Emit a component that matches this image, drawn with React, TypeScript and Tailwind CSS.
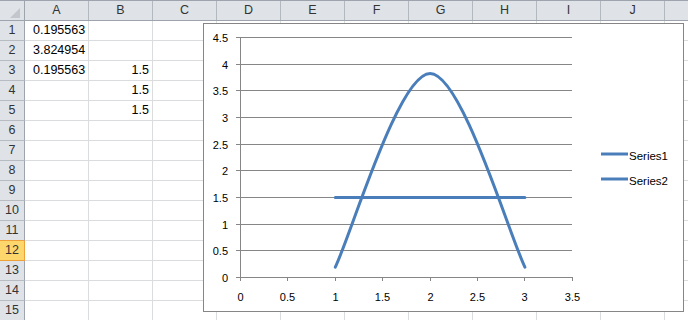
import React from "react";

const cols = ["A", "B", "C", "D", "E", "F", "G", "H", "I", "J"];

// cell contents by row (1-based) -> [A, B]
const data: Record<number, [string, string]> = {
  1: ["0.195563", ""],
  2: ["3.824954", ""],
  3: ["0.195563", "1.5"],
  4: ["", "1.5"],
  5: ["", "1.5"],
};

const px = (v: number) => 240.5 + v * 94.8;
const py = (v: number) => 277.5 - v * 53.333;

function Chart() {
  const yTicks = [0, 0.5, 1, 1.5, 2, 2.5, 3, 3.5, 4, 4.5];
  const xTicks = [0, 0.5, 1, 1.5, 2, 2.5, 3, 3.5];

  // excel style smoothed line through 3 points
  const p0 = [px(1), py(0.195563)];
  const p1 = [px(2), py(3.824954)];
  const p2 = [px(3), py(0.195563)];
  const c1 = [p0[0] + (p1[0] - p0[0]) / 6, p0[1] + (p1[1] - p0[1]) / 6];
  const c2 = [p1[0] - (p2[0] - p0[0]) / 6, p1[1]];
  const c3 = [p1[0] + (p2[0] - p0[0]) / 6, p1[1]];
  const c4 = [p2[0] - (p2[0] - p1[0]) / 6, p2[1] - (p2[1] - p1[1]) / 6];
  const curve = `M${p0[0]} ${p0[1]} C${c1[0]} ${c1[1]} ${c2[0]} ${c2[1]} ${p1[0]} ${p1[1]} C${c3[0]} ${c3[1]} ${c4[0]} ${c4[1]} ${p2[0]} ${p2[1]}`;

  return (
    <div className="absolute left-[203px] top-[23px] w-[481px] h-[289px] border border-[#868686] bg-white">
      <svg width={479} height={287} viewBox="204 24 479 287" className="block">
        {yTicks.map((t) => {
          const y = Math.round(py(t) - 0.5) + 0.5;
          return (
            <g key={t}>
              <line x1={236} x2={572} y1={y} y2={y} stroke="#868686" strokeWidth={1} />
              <text
                x={228}
                y={y + 4}
                textAnchor="end"
                fontSize={11}
                fontFamily="Liberation Sans, Arial, sans-serif"
                fill="#000"
              >
                {t}
              </text>
            </g>
          );
        })}
        <line x1={240.5} x2={240.5} y1={37} y2={281} stroke="#868686" strokeWidth={1} />
        {xTicks.map((t) => {
          const x = Math.round(px(t) - 0.5) + 0.5;
          return (
            <g key={t}>
              <line x1={x} x2={x} y1={277} y2={281} stroke="#868686" strokeWidth={1} />
              <text
                x={x}
                y={300.5}
                textAnchor="middle"
                fontSize={11}
                fontFamily="Liberation Sans, Arial, sans-serif"
                fill="#000"
              >
                {t}
              </text>
            </g>
          );
        })}
        <path d={curve} fill="none" stroke="#4a7ebb" strokeWidth={3} strokeLinecap="round" />
        <line x1={px(1)} x2={px(3)} y1={197.5} y2={197.5} stroke="#4a7ebb" strokeWidth={3} strokeLinecap="round" />

        <line x1={601} x2={628} y1={154} y2={154} stroke="#4a7ebb" strokeWidth={3} />
        <text x={629} y={159.5} fontSize={11.5} fontFamily="Liberation Sans, Arial, sans-serif" fill="#000">
          Series1
        </text>
        <line x1={601} x2={628} y1={179} y2={179} stroke="#4a7ebb" strokeWidth={3} />
        <text x={629} y={184.5} fontSize={11.5} fontFamily="Liberation Sans, Arial, sans-serif" fill="#000">
          Series2
        </text>
      </svg>
    </div>
  );
}

function RowHeader({ n }: { n: number }) {
  if (n === 12) {
    return (
      <div className="w-[25px] shrink-0 flex items-center justify-center bg-[#fdd66c] border-r border-b border-[#eea03a] text-[#333]">
        {n}
      </div>
    );
  }
  if (n === 11) {
    return (
      <div className="w-[25px] shrink-0 flex items-center justify-center bg-[#dfe3e8] border-r border-r-[#9ea4ad] border-b border-b-[#eea03a] text-[#333]">
        {n}
      </div>
    );
  }
  return (
    <div className="w-[25px] shrink-0 flex items-center justify-center bg-[#dfe3e8] border-r border-r-[#9ea4ad] border-b border-b-[#b7bcc3] text-[#333]">
      {n}
    </div>
  );
}

export default function App() {
  const rows = Array.from({ length: 15 }, (_, i) => i + 1);

  return (
    <div className="relative w-[688px] h-[320px] overflow-hidden bg-white font-['Liberation_Sans',Arial,sans-serif] text-[12.5px] leading-none">
      {/* column headers */}
      <div className="flex h-[21px] bg-[#dfe3e8] border-t border-b border-[#9ea4ad] text-[#333]">
        <div className="w-[25px] shrink-0 border-r border-[#9ea4ad] relative">
          <svg width={24} height={19} className="block">
            <polygon points="20,7 20,17 10,17" fill="#c3c7cd" />
          </svg>
        </div>
        {cols.map((c) => (
          <div
            key={c}
            className="w-[64px] shrink-0 border-r border-[#b3b8bf] flex items-center justify-center"
          >
            {c}
          </div>
        ))}
        <div className="flex-1" />
      </div>

      {/* sheet rows */}
      {rows.map((n) => (
        <div key={n} className="flex h-[20px]">
          <RowHeader n={n} />
          {cols.map((c, ci) => {
            const val = data[n]?.[ci] ?? "";
            return (
              <div
                key={c}
                className={
                  ci === 1
                    ? "w-[64px] shrink-0 border-r border-b border-[#dadcdd] flex items-center justify-end pr-[3px]"
                    : "w-[64px] shrink-0 border-r border-b border-[#dadcdd] flex items-center pl-[8px]"
                }
              >
                {ci < 2 ? val : ""}
              </div>
            );
          })}
          <div className="flex-1 border-b border-[#dadcdd]" />
        </div>
      ))}

      <Chart />
    </div>
  );
}
